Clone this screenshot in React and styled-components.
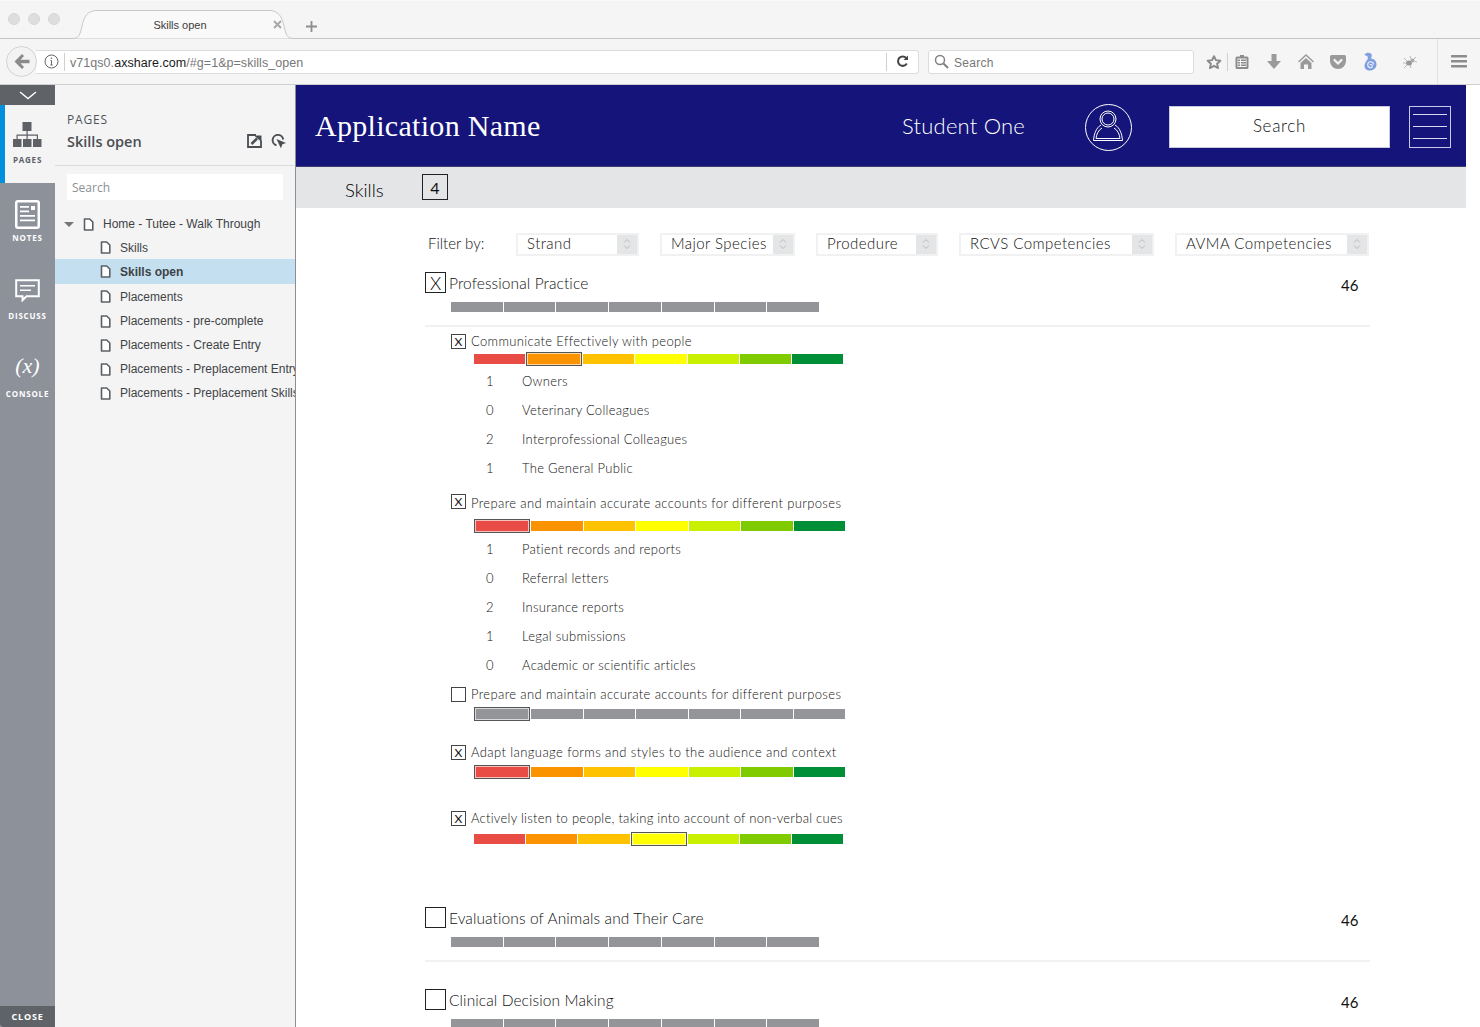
import React from "react";
import styled, { createGlobalStyle } from "styled-components";

const Global = createGlobalStyle`
  html, body { margin: 0; padding: 0; background: #fff; }
  body { width: 1480px; height: 1027px; overflow: hidden; font-family: "Liberation Sans", Arial, sans-serif; }
  * { box-sizing: border-box; }
`;
const GOTHIC = `"Lato", "Open Sans", sans-serif`;

const Page = styled.div`width:1480px;height:1027px;display:flex;flex-direction:column;overflow:hidden;`;
const TabBar = styled.div`height:39px;flex:none;background:#f5f5f5;border-bottom:1px solid #c4c4c4;border-top:1px solid #fafafa;display:flex;align-items:flex-end;padding-left:8px;`;
const Lights = styled.div`display:flex;gap:8px;align-self:flex-start;margin-top:12px;width:64px;flex:none;`;
const Light = styled.span`width:12px;height:12px;border-radius:50%;background:#dedede;border:1px solid #d6d6d6;`;
const Tab = styled.div`position:relative;width:222px;height:29px;margin-bottom:-1px;display:flex;align-items:center;justify-content:center;font:11px "Liberation Sans",sans-serif;color:#3c3c3c;padding-right:6px;`;
const TabShape = styled.svg`position:absolute;left:0;top:0;width:222px;height:29px;`;
const TabLabel = styled.span`position:relative;`;
const TabClose = styled.span`position:absolute;right:12px;top:10px;color:#a8a8a8;line-height:0;`;
const NewTab = styled.span`margin:0 0 6px 12px;line-height:0;color:#8e8e8e;`;

const Toolbar = styled.div`height:46px;flex:none;background:#f5f5f5;border-bottom:1px solid #cfcfcf;display:flex;align-items:center;padding:0 0 0 6px;`;
const Back = styled.div`width:31px;height:31px;border-radius:50%;background:#f3f3f3;border:1px solid #d2d2d2;display:flex;align-items:center;justify-content:center;position:relative;z-index:1;flex:none;margin-right:-1px;`;
const UrlBar = styled.div`width:883px;height:24px;background:#fff;border:1px solid #dcdcdc;border-left:none;border-radius:0 3px 3px 0;display:flex;align-items:center;flex:none;margin-right:9px;padding:0 8px 0 8px;`;
const Divider = styled.span`width:1px;height:18px;background:#cfcfcf;margin:${p => p.$m};flex:none;`;
const UrlText = styled.span`font:12.5px "Liberation Sans",sans-serif;letter-spacing:.05px;color:#777;flex:1;margin-top:2px;`;
const Host = styled.span`color:#1a1a1a;`;
const BrowserSearch = styled.div`width:266px;height:24px;background:#fff;border:1px solid #dcdcdc;border-radius:3px;display:flex;align-items:center;flex:none;padding-left:5px;gap:5px;font:12px "Liberation Sans",sans-serif;color:#777;letter-spacing:.3px;`;
const SearchLabel = styled.span`margin-top:2px;`;
const ToolIcons = styled.div`display:flex;align-items:center;flex:1;height:100%;padding-left:12px;`;
const ToolIcon = styled.span`width:${p => p.$w}px;margin-left:${p => p.$ml || 0}px;display:flex;justify-content:center;flex:none;line-height:0;`;
const ToolSep = styled.span`width:1px;height:100%;background:#e2e2e2;flex:none;margin-left:19px;`;

const Body = styled.div`flex:1;display:flex;min-height:0;`;
const Rail = styled.nav`width:55px;flex:none;background:#8d9199;display:flex;flex-direction:column;`;
const RailTop = styled.div`height:20px;background:#5f6367;display:flex;align-items:center;justify-content:center;color:#fff;line-height:0;`;
const RailTabActive = styled.div`height:78px;background:#f4f4f4;border-left:5px solid #0090de;display:flex;flex-direction:column;align-items:center;padding:17px 5px 0 0;color:#5d6166;`;
const RailTab = styled.div`height:${p => p.$h}px;display:flex;flex-direction:column;align-items:center;color:#fff;padding-top:${p => p.$pt}px;line-height:0;`;
const RailLabel = styled.span`font:700 8px "Open Sans",sans-serif;letter-spacing:.8px;line-height:10px;margin-top:${p => p.$mt}px;`;
const Formula = styled.span`font:italic 22px "Liberation Serif",serif;line-height:24px;height:24px;`;
const RailSpace = styled.div`flex:1;`;
const RailClose = styled.div`height:21px;background:#5f6367;border-bottom-left-radius:4px;color:#fff;display:flex;align-items:center;justify-content:center;font:700 9px "Open Sans",sans-serif;letter-spacing:.8px;`;

const Panel = styled.aside`width:241px;flex:none;background:#f4f4f4;border-right:1px solid #8e8e8e;overflow:hidden;`;
const PanelHead = styled.div`height:81px;border-bottom:1px solid #dcdcdc;padding:27px 10px 0 12px;position:relative;`;
const PanelKicker = styled.div`font:400 12px "Open Sans",sans-serif;letter-spacing:.8px;color:#4f5358;line-height:16px;`;
const PanelTitle = styled.div`font:600 14.5px "Open Sans",sans-serif;color:#4a4e52;line-height:22px;margin-top:3px;`;
const PanelActions = styled.div`position:absolute;right:9px;top:49px;display:flex;gap:9px;line-height:0;`;
const PanelSearch = styled.div`margin:8px 12px 0;height:26px;width:216px;background:#fff;padding-left:5px;display:flex;align-items:center;font:12px "Open Sans",sans-serif;color:#8a8f94;`;
const Tree = styled.div`margin-top:12px;display:flex;flex-direction:column;`;
const Row = styled.div`height:${p => p.$h || 24}px;padding-left:${p => p.$root ? 9 : 45}px;display:flex;align-items:center;font:${p => p.$active ? 700 : 400} 12px "Liberation Sans",sans-serif;color:#3f4347;background:${p => p.$active ? "#c4dff0" : "transparent"};white-space:nowrap;`;
const Caret = styled.span`width:0;height:0;border-left:5px solid transparent;border-right:5px solid transparent;border-top:5px solid #777;margin-right:9px;margin-top:1px;`;
const DocIcon = styled.svg`flex:none;margin-right:9px;`;

const Main = styled.main`width:1170px;flex:none;display:flex;flex-direction:column;overflow:hidden;font-family:${GOTHIC};font-weight:300;color:#111;`;
const Header = styled.header`height:82px;flex:none;background:#14147a;border-bottom:1px solid #3c3c6e;display:flex;align-items:center;padding:0 15px 0 19px;color:#fff;`;
const AppName = styled.div`font:30px "Liberation Serif",serif;letter-spacing:.3px;flex:1;`;
const Student = styled.div`font:300 22px ${GOTHIC};letter-spacing:.2px;margin-right:60px;`;
const Avatar = styled.svg`margin:4px 37px 0 0;flex:none;`;
const HeaderSearch = styled.div`width:221px;height:42px;margin:2px 19px 0 0;padding-bottom:3px;background:#fff;border:1px solid #c8c8e0;color:#111;display:flex;align-items:center;justify-content:center;font:300 17px ${GOTHIC};letter-spacing:.7px;`;
const MenuBox = styled.div`width:42px;height:42px;margin-top:2px;border:1px solid #c8c8e8;display:flex;flex-direction:column;justify-content:center;gap:11px;padding:0 3px;`;
const MenuLine = styled.span`height:1px;background:#d8d8f0;`;
const Band = styled.div`height:41px;flex:none;background:#e4e5e7;display:flex;align-items:flex-start;padding:7px 0 0 49px;`;
const BandTitle = styled.div`font:300 18.5px ${GOTHIC};line-height:32px;width:77px;color:#000;`;
const BandCount = styled.div`width:26px;height:26px;border:1px solid #222;display:flex;align-items:center;justify-content:center;font:400 16px ${GOTHIC};color:#111;`;
const Content = styled.div`width:945px;margin-left:129px;display:flex;flex-direction:column;`;
const FilterRow = styled.div`margin-top:25px;height:22px;display:flex;align-items:center;flex:none;`;
const FilterLabel = styled.div`font:300 15px ${GOTHIC};width:91px;flex:none;padding:0 0 2px 3px;`;
const Select = styled.div`width:${p => p.$w}px;height:23px;border:2px solid #f1f1f2;margin-right:21px;display:flex;justify-content:space-between;align-items:stretch;flex:none;`;
const SelectText = styled.span`font:300 15px ${GOTHIC};letter-spacing:.45px;padding-left:9px;line-height:17px;color:#111;white-space:nowrap;`;
const SelectArrow = styled.span`width:20px;background:#e4e5e7;display:flex;align-items:center;justify-content:center;line-height:0;flex:none;`;
const Section = styled.section`margin-top:${p => p.$top}px;display:flex;flex-direction:column;flex:none;`;
const SectionHead = styled.div`height:21px;display:flex;align-items:center;`;
const BigBox = styled.div`width:21px;height:21px;border:1px solid #222;display:flex;align-items:center;justify-content:center;font:300 18px ${GOTHIC};color:#000;flex:none;margin-right:3px;`;
const SectionTitle = styled.div`font:300 15.5px ${GOTHIC};letter-spacing:.1px;flex:1;margin-top:1px;`;
const SectionCount = styled.div`font:400 15px ${GOTHIC};width:29px;margin-top:4px;color:#111;`;
const Track = styled.div`display:flex;gap:1px;align-items:center;height:${p => p.$h}px;width:${p => p.$w}px;margin:${p => p.$m};flex:none;`;
const Seg = styled.span`flex:${p => p.$on ? "0 0 56px" : "1 1 0"};height:${p => p.$on ? 14 : 10}px;background:${p => p.$c};${p => p.$on ? "border:1px solid #555;box-shadow:inset 0 0 0 1px rgba(255,255,255,.65);" : ""}`;
const Rule = styled.div`height:2px;background:#f1f1f2;margin-top:13px;flex:none;`;
const Sub = styled.div`margin:${p => p.$top}px 0 0 26px;display:flex;flex-direction:column;flex:none;`;
const SubHead = styled.div`height:15px;display:flex;align-items:center;`;
const SmallBox = styled.div`width:15px;height:15px;border:1px solid #444;display:flex;align-items:center;justify-content:center;font:400 12px ${GOTHIC};color:#111;flex:none;margin-right:5px;`;
const SubTitle = styled.div`font:300 13px ${GOTHIC};letter-spacing:${p => p.$ls ?? .37}px;white-space:nowrap;margin-top:${p => p.$dy || 0}px;`;
const Items = styled.div`margin:${p => p.$top}px 0 0 0;display:flex;flex-direction:column;`;
const Item = styled.div`height:29px;display:flex;align-items:center;font:300 13px ${GOTHIC};letter-spacing:.28px;`;
const ItemCount = styled.span`width:97px;padding-left:61px;`;

const COLORS = ["#e84c45","#fb9300","#ffc200","#ffff00","#c8f000","#80cb00","#008f36"];
const GREY = Array(7).fill("#939598");
const Bar = ({ w, h = 14, m, on, colors = COLORS }) => (
  <Track $w={w} $h={h} $m={m}>
    {colors.map((c, i) => <Seg key={i} $c={c} $on={i === on} />)}
  </Track>
);

const Doc = () => (
  <DocIcon width="11" height="13" viewBox="0 0 11 13">
    <path d="M1.500 1h5.200L9.800 4v8h-8.300z" fill="#fff" stroke="#5c6065" strokeWidth="1.600" strokeLinejoin="round"/>
  </DocIcon>
);
const Arrows = () => (
  <svg width="8" height="12" viewBox="0 0 8 12" fill="none" stroke="#b9bbbe" strokeWidth="1">
    <path d="M1 4.500 4 1.500 7 4.500M1 7.500 4 10.500 7 7.500"/>
  </svg>
);
const Filter = ({ w, children }) => (
  <Select $w={w}><SelectText>{children}</SelectText><SelectArrow><Arrows/></SelectArrow></Select>
);
const SubRow = ({ top, checked, title, barTop, barW, on, colors, dy, ls }) => (
  <Sub $top={top}>
    <SubHead>
      <SmallBox>{checked ? "X" : ""}</SmallBox>
      <SubTitle $dy={dy} $ls={ls}>{title}</SubTitle>
    </SubHead>
    <Bar w={barW} m={`${barTop}px 0 0 23px`} on={on} colors={colors} />
  </Sub>
);
const TOOL = "#9a9a9a";

export default function App() {
  return (
    <Page>
      <Global />
      <TabBar>
        <Lights><Light/><Light/><Light/></Lights>
        <Tab>
          <TabShape viewBox="0 0 222 29" fill="none">
            <path d="M0 28.500C7 28.500 8 25 10 16 12 6 16 1 24 .5H198C206 1 210 6 212 16 214 25 215 28.500 222 28.500" fill="#f9f9f9" stroke="#c8c8c8"/>
          </TabShape>
          <TabLabel>Skills open</TabLabel>
          <TabClose><svg width="9" height="9" viewBox="0 0 9 9" stroke="currentColor" strokeWidth="2"><path d="M1 1l7 7M8 1l-7 7"/></svg></TabClose>
        </Tab>
        <NewTab><svg width="11" height="11" viewBox="0 0 11 11" stroke="currentColor" strokeWidth="1.800"><path d="M5.500 0v11M0 5.500h11"/></svg></NewTab>
      </TabBar>
      <Toolbar>
        <Back>
          <svg width="16" height="15" viewBox="0 0 16 15" fill="#8a8a8a"><path d="M8 0l2 2-3.500 3.700H15.500v3.600H6.500L10 13l-2 2L.5 7.500z"/></svg>
        </Back>
        <UrlBar>
          <svg width="15" height="15" viewBox="0 0 15 15" fill="none" stroke="#666" strokeWidth="1"><circle cx="7.500" cy="7.500" r="6.500"/><path d="M7.500 6.500v4.500M6.300 11h2.400M6.500 6.500h1" /><circle cx="7.400" cy="4.300" r=".8" fill="#666" stroke="none"/></svg>
          <Divider $m="0 5px 0 5px" />
          <UrlText>v71qs0.<Host>axshare.com</Host>/#g=1&amp;p=skills_open</UrlText>
          <Divider $m="0 8px 0 0" />
          <ToolIcon $w={15}><svg width="13" height="13" viewBox="0 0 13 13" fill="none" stroke="#444" strokeWidth="2"><path d="M10.800 8.500A4.700 4.700 0 1 1 10.200 3"/><path d="M12 0.500v4.500H7.500z" fill="#444" stroke="none"/></svg></ToolIcon>
        </UrlBar>
        <BrowserSearch>
          <svg width="15" height="15" viewBox="0 0 15 15" fill="none" stroke="#808080" strokeWidth="1.500"><circle cx="6" cy="6" r="4.500"/><path d="M9.500 9.500 14 14" strokeWidth="2"/></svg>
          <SearchLabel>Search</SearchLabel>
        </BrowserSearch>
        <ToolIcons>
          <ToolIcon $w={16}><svg width="17" height="16" viewBox="0 0 17 16" fill="none" stroke="#8c8c8c" strokeWidth="2.100" strokeLinejoin="round"><path d="M8.500 1.800l2 4.200 4.700.6-3.400 3.200 1 4.600-4.300-2.300-4.300 2.300 1-4.600-3.400-3.200 4.700-.6z"/></svg></ToolIcon>
          <Divider $m="0 7px 0 5px" />
          <ToolIcon $w={14}><svg width="14" height="15" viewBox="0 0 14 15"><path d="M2 2.500h3V1h4v1.500h3a1.500 1.500 0 0 1 1.500 1.500v9.500a1.500 1.500 0 0 1-1.500 1.500H2A1.500 1.500 0 0 1 .5 13.500V4A1.500 1.500 0 0 1 2 2.500z" fill="#8c8c8c"/><path d="M2.500 4.500h9v8.500h-9z" fill="#f5f5f5"/><path d="M3 5.500h2v1.500H3zM6 5.500h5v1.500H6zM3 8h2v1.500H3zM6 8h5v1.500H6zM3 10.500h2V12H3zM6 10.500h5V12H6z" fill="#8c8c8c"/></svg></ToolIcon>
          <ToolIcon $w={18} $ml={16}><svg width="14" height="15" viewBox="0 0 14 15" fill={TOOL}><path d="M4.500 0h5v7H14L7 15 0 7h4.500z"/></svg></ToolIcon>
          <ToolIcon $w={16} $ml={15}><svg width="16" height="15" viewBox="0 0 16 15" fill={TOOL}><path d="M8 0l8 7.500-1 1L8 2 1 8.500l-1-1zM8 4l5.500 5v6H10V10.500H6V15H2.500V9z"/></svg></ToolIcon>
          <ToolIcon $w={16} $ml={16}><svg width="16" height="14" viewBox="0 0 16 14"><path d="M1.500 0h13A1.500 1.500 0 0 1 16 1.500V6A8 8 0 0 1 0 6V1.500A1.500 1.500 0 0 1 1.500 0z" fill={TOOL}/><path d="M4.500 5 8 8.500 11.500 5" fill="none" stroke="#f5f5f5" strokeWidth="2.200" strokeLinecap="round"/></svg></ToolIcon>
          <ToolIcon $w={16} $ml={16}><svg width="14" height="19" viewBox="0 0 14 19"><path d="M1.500 2.500C3 .5 6 .2 7.500 1.200 9.500 2.500 9 5 7.500 6.500 11 6.500 13.500 9 13.500 12.500 13.500 16 10.500 18.500 7 18.500 3.500 18.500 1.500 16.500 1.500 14 1.500 11.500 3 9.500 4.500 7.500 5 6 5 4.500 4 4 3 3.500 2 3.500 1.500 2.500z" fill="#7f9fe2"/><path d="M10.500 12.500C10.500 10.500 8.800 9.500 7.300 9.800 5.500 10.200 4.500 11.800 4.800 13.400 5.100 15 6.600 16 8 15.700 9.200 15.400 9.700 14 9 13 8.400 12.200 7.200 12.300 7 13.200" fill="none" stroke="#f5f5f5" strokeWidth="1.100"/></svg></ToolIcon>
          <ToolIcon $w={16} $ml={24}><svg width="16" height="14" viewBox="0 0 16 14" fill="none" stroke="#bbb" strokeWidth="1"><ellipse cx="7" cy="8" rx="3" ry="2.500" fill="#999" stroke="none"/><circle cx="10.500" cy="5.500" r="2" fill="#aaa" stroke="none"/><path d="M5 6 2 3M4.500 8 1 8M5 10l-3 3M8 10l1 3M9 4l-1-3M12 4l2-2M12.500 6.500 15 7"/></svg></ToolIcon>
          <ToolSep/>
          <ToolIcon $w={16} $ml={13}><svg width="16" height="13" viewBox="0 0 16 13" fill="#8c8c8c"><rect width="16" height="2.600" rx=".5"/><rect y="5" width="16" height="2.600" rx=".5"/><rect y="10" width="16" height="2.600" rx=".5"/></svg></ToolIcon>
        </ToolIcons>
      </Toolbar>
      <Body>
        <Rail>
          <RailTop><svg width="18" height="9" viewBox="0 0 18 9" fill="none" stroke="currentColor" strokeWidth="1.400"><path d="M1 1l8 6.500L17 1"/></svg></RailTop>
          <RailTabActive>
            <svg width="29" height="26" viewBox="0 0 29 26" fill="#5d6166"><rect x="9.500" y="0" width="9" height="9"/><rect x="0" y="17" width="8.500" height="8"/><rect x="10" y="17" width="8.500" height="8"/><rect x="20" y="17" width="8.500" height="8"/><path d="M13.500 9h1.200v3.500H25v4.500h-1.200v-3.300H14.700V17h-1.200v-3.300H4.700V17H3.500v-4.500h10z"/></svg>
            <RailLabel $mt={7}>PAGES</RailLabel>
          </RailTabActive>
          <RailTab $h={78} $pt={17}>
            <svg width="25" height="29" viewBox="0 0 25 29"><rect x="0" y="0" width="25" height="29" rx="3" fill="#fff"/><rect x="2.500" y="2.500" width="20" height="24" fill="#8d9199"/><path d="M5 6h9v1.800H5zM16 6h4v4h-4zM5 10.500h9v1.800H5zM5 15h15v1.800H5zM5 19.500h15v1.800H5z" fill="#fff"/></svg>
            <RailLabel $mt={4}>NOTES</RailLabel>
          </RailTab>
          <RailTab $h={78} $pt={18}>
            <svg width="25" height="23" viewBox="0 0 25 23"><path d="M1.200 1.200h22.600v16H11.500l-4 4v-4H1.200z" fill="none" stroke="#fff" strokeWidth="2"/><path d="M5 6h15v1.600H5zM5 10.500h11v1.600H5z" fill="#fff"/></svg>
            <RailLabel $mt={9}>DISCUSS</RailLabel>
          </RailTab>
          <RailTab $h={78} $pt={15}>
            <Formula>(x)</Formula>
            <RailLabel $mt={11}>CONSOLE</RailLabel>
          </RailTab>
          <RailSpace/>
          <RailClose>CLOSE</RailClose>
        </Rail>
        <Panel>
          <PanelHead>
            <PanelKicker>PAGES</PanelKicker>
            <PanelTitle>Skills open</PanelTitle>
            <PanelActions>
              <svg width="15" height="14" viewBox="0 0 15 14" fill="none" stroke="#4a4e52" strokeWidth="1.800"><path d="M14 6.500V13H1V1h8"/><path d="M4.500 10 10 4.500" strokeWidth="2.600"/><path d="M7 1.500h7.500V8z" fill="#4a4e52" stroke="none"/></svg>
              <svg width="15" height="15" viewBox="0 0 15 15" fill="none" stroke="#4a4e52" strokeWidth="1.900"><path d="M12.200 5.500A5.300 5.300 0 1 0 5.500 11.300"/><path d="M5.500 5l9.500 4-3.600 1.300-1.500 4z" fill="#4a4e52" stroke="none"/></svg>
            </PanelActions>
          </PanelHead>
          <PanelSearch>Search</PanelSearch>
          <Tree>
            <Row $root $h={24}><Caret/><Doc/>Home - Tutee - Walk Through</Row>
            <Row $h={23}><Doc/>Skills</Row>
            <Row $h={25} $active><Doc/>Skills open</Row>
            <Row $h={25}><Doc/>Placements</Row>
            <Row $h={24}><Doc/>Placements - pre-complete</Row>
            <Row $h={24}><Doc/>Placements - Create Entry</Row>
            <Row $h={24}><Doc/>Placements - Preplacement Entry</Row>
            <Row $h={24}><Doc/>Placements - Preplacement Skills</Row>
          </Tree>
        </Panel>
        <Main>
          <Header>
            <AppName>Application Name</AppName>
            <Student>Student One</Student>
            <Avatar width="47" height="47" viewBox="0 0 47 47" fill="none" stroke="#fff" strokeWidth="1">
              <circle cx="23.500" cy="23.500" r="23"/>
              <circle cx="23" cy="15" r="8"/><circle cx="23" cy="15" r="6"/>
              <path d="M16 21C11 24 9 30 8.500 36.500h29C37 30 35 24 30 21"/>
              <path d="M17 24C13.500 26 11.500 30 11 34.500h24C34.500 30 32.500 26 29 24"/>
            </Avatar>
            <HeaderSearch>Search</HeaderSearch>
            <MenuBox><MenuLine/><MenuLine/><MenuLine/></MenuBox>
          </Header>
          <Band><BandTitle>Skills</BandTitle><BandCount>4</BandCount></Band>
          <Content>
            <FilterRow>
              <FilterLabel>Filter by:</FilterLabel>
              <Filter w={123}>Strand</Filter>
              <Filter w={135}>Major Species</Filter>
              <Filter w={122}>Prodedure</Filter>
              <Filter w={195}>RCVS Competencies</Filter>
              <Filter w={194}>AVMA Competencies</Filter>
            </FilterRow>
            <Section $top={17}>
              <SectionHead><BigBox>X</BigBox><SectionTitle>Professional Practice</SectionTitle><SectionCount>46</SectionCount></SectionHead>
              <Bar w={368} h={10} m="9px 0 0 26px" colors={GREY} />
              <Rule/>
            </Section>
            <SubRow top={7} checked title="Communicate Effectively with people" barTop={3} barW={369} on={1} dy={-1} ls={.35}/>
            <Items $top={0}>
              {[["1","Owners"],["0","Veterinary Colleagues"],["2","Interprofessional Colleagues"],["1","The General Public"]].map(([n,t]) => <Item key={t}><ItemCount>{n}</ItemCount>{t}</Item>)}
            </Items>
            <SubRow top={12} checked title="Prepare and maintain accurate accounts for different purposes" barTop={10} barW={371} on={0} dy={3}/>
            <Items $top={1}>
              {[["1","Patient records and reports"],["0","Referral letters"],["2","Insurance reports"],["1","Legal submissions"],["0","Academic or scientific articles"]].map(([n,t]) => <Item key={t}><ItemCount>{n}</ItemCount>{t}</Item>)}
            </Items>
            <SubRow top={8} title="Prepare and maintain accurate accounts for different purposes" barTop={5} barW={371} on={0} colors={GREY} dy={-2}/>
            <SubRow top={24} checked title="Adapt language forms and styles to the audience and context" barTop={5} barW={371} on={0} dy={-1} ls={.4}/>
            <SubRow top={32} checked title="Actively listen to people, taking into account of non-verbal cues" barTop={6} barW={369} on={3} dy={-2} ls={.26}/>
            <Section $top={61}>
              <SectionHead><BigBox/><SectionTitle>Evaluations of Animals and Their Care</SectionTitle><SectionCount>46</SectionCount></SectionHead>
              <Bar w={368} h={10} m="9px 0 0 26px" colors={GREY} />
              <Rule/>
            </Section>
            <Section $top={27}>
              <SectionHead><BigBox/><SectionTitle>Clinical Decision Making</SectionTitle><SectionCount>46</SectionCount></SectionHead>
              <Bar w={368} h={10} m="9px 0 0 26px" colors={GREY} />
            </Section>
          </Content>
        </Main>
      </Body>
    </Page>
  );
}
